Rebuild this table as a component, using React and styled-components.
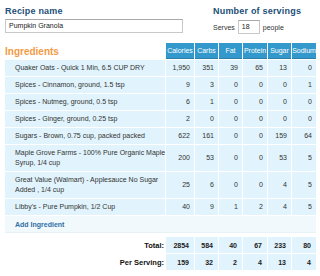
import React from 'react'
import styled, { createGlobalStyle } from 'styled-components'

const Global = createGlobalStyle`
body{
    margin: 0;
    background: #fff;
    font-family: "Liberation Sans", Arial, sans-serif;
}
`

const Page = styled.div`
width: 320px;
height: 276px;
padding: 6px 4px 0 5px;
box-sizing: border-box;
overflow: hidden;
`

const Top = styled.div`
display: flex;
gap: 30px;
height: 37px;
`

const Field = styled.div`
display: flex;
flex-direction: column;
width: ${p => p.w}px;
`

const Label = styled.div`
color: #1d4f78;
font-weight: bold;
font-size: 9px;
height: 10px;
line-height: 10px;
letter-spacing: 0.2px;
`

const TextBox = styled.div`
margin-top: 3px;
height: 14px;
border: 1px solid #c8c8c8;
border-top-color: #a8a8a8;
box-sizing: border-box;
font-size: 7px;
line-height: 12px;
padding-left: 3px;
color: #222;
`

const Serves = styled.div`
display: flex;
align-items: center;
gap: 3px;
margin-top: 4px;
font-size: 7px;
color: #333;
`

const SmallBox = styled(TextBox)`
margin: 0;
width: 22px;
height: 14px;
`

const Table = styled.div`
display: flex;
flex-direction: column;
gap: 1px;
width: 311px;
`

const Row = styled.div`
display: grid;
grid-template-columns: 160px 28px 23px 23px 24px 23px 24px;
gap: 1px;
`

const Title = styled.div`
color: #f39a45;
font-weight: bold;
font-size: 10px;
display: flex;
align-items: flex-end;
padding-bottom: 2px;
`

const Head = styled.div`
background: #3399cc;
border-bottom: 1px solid #2a7fab;
color: #fff;
font-size: 7px;
height: 15px;
display: flex;
align-items: center;
justify-content: center;
overflow: hidden;
white-space: nowrap;
`

const Cell = styled.div`
background: #e1f3fc;
font-size: 7px;
line-height: 10px;
color: #333;
height: ${p => (p.tall ? '26px' : '16px')};
padding: 0 4px 0 ${p => (p.num ? '4px' : '10px')};
box-sizing: border-box;
display: flex;
align-items: center;
justify-content: ${p => (p.num ? 'flex-end' : 'flex-start')};
white-space: nowrap;
`

const AddRow = styled.div`
background: #f2f9fd;
height: 16px;
display: flex;
align-items: center;
padding-left: 10px;
font-size: 7px;
font-weight: bold;
color: #2f6fa3;
border-bottom: 1px solid #e8f1f6;
margin-bottom: 3px;
`

const TotalLabel = styled.div`
display: flex;
align-items: center;
justify-content: flex-end;
padding-right: 1px;
font-size: 7.5px;
font-weight: bold;
color: #111;
height: 16px;
`

const TotalCell = styled.div`
background: #e1f3fc;
display: flex;
align-items: center;
justify-content: flex-end;
padding-right: 5px;
font-size: 7px;
font-weight: bold;
color: #222;
height: 16px;
`

const ingredients = [
    { name: 'Quaker Oats - Quick 1 Min, 6.5 CUP DRY', v: ['1,950', 351, 39, 65, 13, 0] },
    { name: 'Spices - Cinnamon, ground, 1.5 tsp', v: [9, 3, 0, 0, 0, 1] },
    { name: 'Spices - Nutmeg, ground, 0.5 tsp', v: [6, 1, 0, 0, 0, 0] },
    { name: 'Spices - Ginger, ground, 0.25 tsp', v: [2, 0, 0, 0, 0, 0] },
    { name: 'Sugars - Brown, 0.75 cup, packed packed', v: [622, 161, 0, 0, 159, 64] },
    { name: ['Maple Grove Farms - 100% Pure Organic Maple', 'Syrup, 1/4 cup'], v: [200, 53, 0, 0, 53, 5] },
    { name: ['Great Value (Walmart) - Applesauce No Sugar', 'Added , 1/4 cup'], v: [25, 6, 0, 0, 4, 5] },
    { name: "Libby's - Pure Pumpkin, 1/2 Cup", v: [40, 9, 1, 2, 4, 5] },
]

const heads = ['Calories', 'Carbs', 'Fat', 'Protein', 'Sugar', 'Sodium']

function App() {
    return (
        <Page>
            <Global />
            <Top>
                <Field w={178}>
                    <Label>Recipe name</Label>
                    <TextBox>Pumpkin Granola</TextBox>
                </Field>
                <Field w={100}>
                    <Label>Number of servings</Label>
                    <Serves>
                        <span>Serves</span>
                        <SmallBox>18</SmallBox>
                        <span>people</span>
                    </Serves>
                </Field>
            </Top>
            <Table>
                <Row>
                    <Title>Ingredients</Title>
                    {heads.map(h => <Head key={h}>{h}</Head>)}
                </Row>
                {ingredients.map((ing, i) => {
                    const tall = Array.isArray(ing.name)
                    return (
                        <Row key={i}>
                            <Cell tall={tall}>
                                <div>{tall ? <>{ing.name[0]}<br />{ing.name[1]}</> : ing.name}</div>
                            </Cell>
                            {ing.v.map((n, j) => <Cell key={j} num tall={tall}>{n}</Cell>)}
                        </Row>
                    )
                })}
                <AddRow>Add Ingredient</AddRow>
                <Row>
                    <TotalLabel>Total:</TotalLabel>
                    {[2854, 584, 40, 67, 233, 80].map((n, j) => <TotalCell key={j}>{n}</TotalCell>)}
                </Row>
                <Row>
                    <TotalLabel>Per Serving:</TotalLabel>
                    {[159, 32, 2, 4, 13, 4].map((n, j) => <TotalCell key={j}>{n}</TotalCell>)}
                </Row>
            </Table>
        </Page>
    )
}

export default App
